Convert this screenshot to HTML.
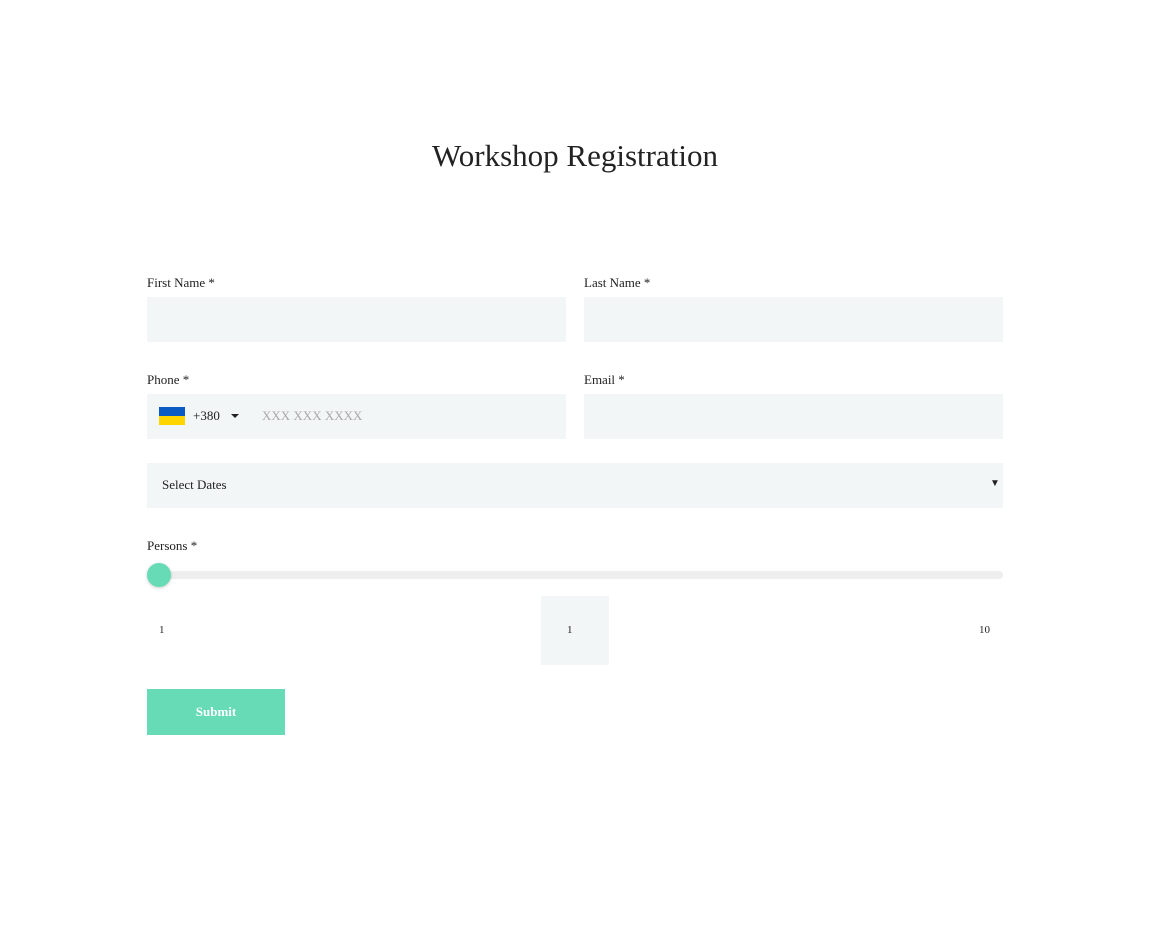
<!DOCTYPE html>
<html><head><meta charset="utf-8"><style>
body{margin:0;background:#fff;font-family:"Liberation Serif",serif;color:#222;width:1150px;height:944px;position:relative;overflow:hidden}
.a{position:absolute}
h1{position:absolute;top:138px;left:0;width:1150px;text-align:center;margin:0;font-weight:normal;font-size:31px;color:#222}
.lbl{font-size:13px;color:#222}
.in{background:#f3f6f6;height:45px}
</style></head><body>
<h1>Workshop Registration</h1>
<div class="a lbl" style="left:147px;top:275px">First Name *</div>
<div class="a lbl" style="left:584px;top:275px">Last Name *</div>
<div class="a in" style="left:147px;top:297px;width:419px"></div>
<div class="a in" style="left:584px;top:297px;width:419px"></div>
<div class="a lbl" style="left:147px;top:372px">Phone *</div>
<div class="a lbl" style="left:584px;top:372px">Email *</div>
<div class="a in" style="left:147px;top:394px;width:419px"></div>
<div class="a in" style="left:584px;top:394px;width:419px"></div>
<div class="a" style="left:159px;top:407px;width:26px;height:9px;background:#0a5bc4"></div>
<div class="a" style="left:159px;top:416px;width:26px;height:9px;background:#ffd500"></div>
<div class="a" style="left:193px;top:408px;font-size:13px">+380</div>
<div class="a" style="left:231px;top:414px;width:0;height:0;border-left:4px solid transparent;border-right:4px solid transparent;border-top:4px solid #222"></div>
<div class="a" style="left:262px;top:408px;font-size:13px;color:#aaa">XXX XXX XXXX</div>
<div class="a in" style="left:147px;top:463px;width:856px"></div>
<div class="a" style="left:162px;top:477px;font-size:13px">Select Dates</div>
<div class="a" style="left:990px;top:478px;font-size:10px">▼</div>
<div class="a lbl" style="left:147px;top:538px">Persons *</div>
<div class="a" style="left:147px;top:571px;width:856px;height:8px;background:#eee;border-radius:4px"></div>
<div class="a" style="left:147px;top:563px;width:24px;height:24px;border-radius:50%;background:#66dbb5;box-shadow:0 1px 3px rgba(0,0,0,.2)"></div>
<div class="a" style="left:159px;top:624px;font-size:11px">1</div>
<div class="a" style="left:541px;top:596px;width:68px;height:69px;background:#f3f6f6"></div>
<div class="a" style="left:567px;top:624px;font-size:11px">1</div>
<div class="a" style="left:979px;top:624px;font-size:11px">10</div>
<div class="a" style="left:147px;top:689px;width:138px;height:46px;background:#66dbb5;color:#fff;font-weight:bold;font-size:13px;text-align:center;line-height:46px">Submit</div>
</body></html>
